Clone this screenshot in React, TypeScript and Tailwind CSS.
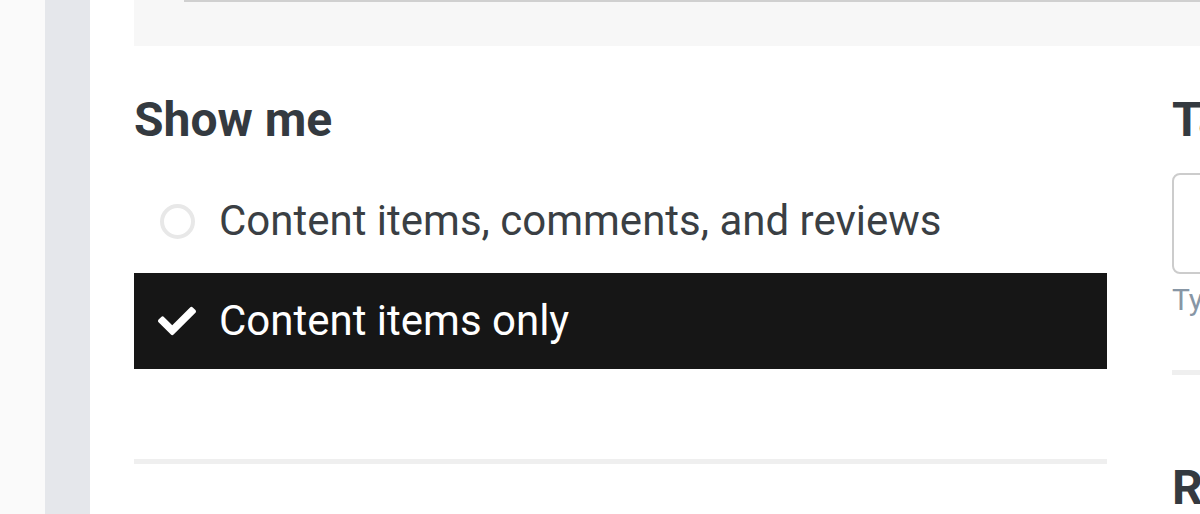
import React from 'react';
import { FaCheck } from 'react-icons/fa';

export default function App() {
  return (
    <div className="flex h-[514px] w-[1200px] overflow-hidden bg-white font-['Roboto',sans-serif]">
      <div className="w-[45px] shrink-0 bg-[#fafafa]" />
      <div className="w-[45px] shrink-0 bg-[#e5e7eb]" />
      <div className="flex min-w-0 flex-1 flex-col pl-[44px]">
        <div className="h-[46px] shrink-0 bg-[#f7f7f7] pl-[50px]">
          <div className="border-t-2 border-[#d0d0d0]" />
        </div>
        <div className="flex gap-[65px]">
          <div className="w-[973px] shrink-0">
            <h2 className="mt-[46px] text-[48px] leading-[56px] font-bold text-[#343a40]">Show me</h2>
            <div className="mt-[45px] flex items-center gap-[22px] pl-[23px]">
              <div className="flex w-[40px] justify-center">
                <div className="h-[35px] w-[35px] rounded-full border-[4px] border-[#e8e8e8]" />
              </div>
              <span className="text-[42px] leading-[56px] text-[#3a3f44]">
                Content items, comments, and reviews
              </span>
            </div>
            <div className="mt-[24px] flex h-[96px] items-center gap-[22px] bg-[#161616] pl-[23px]">
              <div className="flex w-[40px] justify-center">
                <FaCheck className="h-[38px] w-[38px] text-white" />
              </div>
              <span className="text-[42px] leading-[56px] text-white">Content items only</span>
            </div>
            <div className="mt-[90px] h-[5px] bg-[#efefef]" />
          </div>
          <div className="min-w-0 flex-1">
            <h2 className="mt-[46px] text-[48px] leading-[56px] font-bold whitespace-nowrap text-[#343a40]">Tags</h2>
            <div className="mt-[25px] h-[101px] w-[300px] rounded-[8px] border-2 border-[#cccccc]" />
            <p className="mt-[8px] text-[30px] leading-[36px] whitespace-nowrap text-[#8796a5]">Type to add tags</p>
            <div className="mt-[52px] h-[5px] w-[300px] bg-[#efefef]" />
            <h2 className="mt-[85px] text-[48px] leading-[56px] font-bold whitespace-nowrap text-[#343a40]">Rating</h2>
          </div>
        </div>
      </div>
    </div>
  );
}
